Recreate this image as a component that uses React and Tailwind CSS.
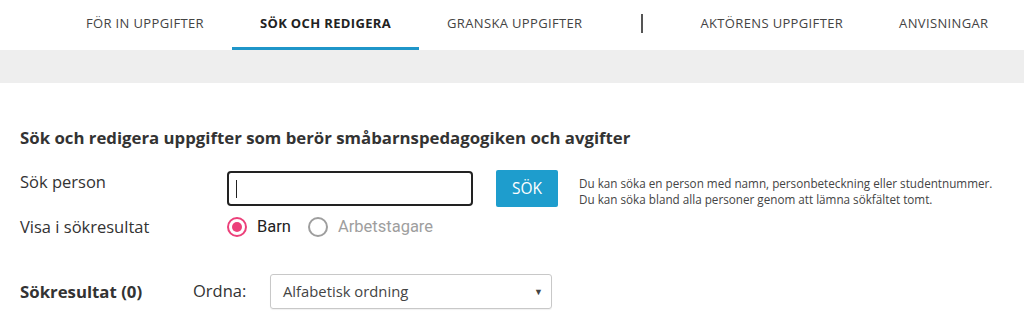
export default function App() {
  const tabs = [
    { label: "FÖR IN UPPGIFTER" },
    { label: "SÖK OCH REDIGERA", active: true },
    { label: "GRANSKA UPPGIFTER" },
  ];

  return (
    <div className="w-[1024px] h-[336px] bg-white overflow-hidden text-[#333] font-['Open_Sans',sans-serif]">
      {/* top navigation */}
      <nav className="h-[50px] flex items-stretch pl-[58px] whitespace-nowrap">
        {tabs.map((t) => (
          <div
            key={t.label}
            className={
              "px-[28px] flex items-center text-[13px] tracking-[0.35px] border-b-[3px] " +
              (t.active
                ? "font-bold text-[#222] border-[#1f96c9]"
                : "text-[#444] border-transparent")
            }
          >
            {t.label}
          </div>
        ))}
        <div className="flex items-center pb-[3px] pl-[31px] pr-[57px]">
          <span className="block w-[2px] h-[19px] bg-[#555]" />
        </div>
        <div className="pr-[28px] flex items-center text-[13px] tracking-[0.35px] text-[#444] border-b-[3px] border-transparent">
          AKTÖRENS UPPGIFTER
        </div>
        <div className="px-[28px] flex items-center text-[13px] tracking-[0.35px] text-[#444] border-b-[3px] border-transparent">
          ANVISNINGAR
        </div>
      </nav>

      <div className="h-[33px] bg-[#eeeeee]" />

      <div className="pl-[20px] pt-[44px]">
        <h1 className="text-[16.8px] leading-[22px] font-bold text-[#333] whitespace-nowrap">
          Sök och redigera uppgifter som berör småbarnspedagogiken och avgifter
        </h1>

        <div className="mt-[21px] flex items-start">
          <div className="w-[207px] text-[16.5px] leading-[24px]">Sök person</div>
          <div className="mt-[1px] w-[246px] h-[35px] border-2 border-[#222] rounded-[4px] flex items-center pl-[7px]">
            <span className="block w-[1px] h-[18px] bg-[#222]" />
          </div>
          <button className="ml-[23px] w-[62px] h-[37px] bg-[#1e9dcd] text-white text-[15.5px] rounded-[2px]">
            SÖK
          </button>
          <div className="ml-[21px] mt-[5px] text-[11.7px] leading-[16px] text-[#444] whitespace-nowrap">
            <div>Du kan söka en person med namn, personbeteckning eller studentnummer.</div>
            <div>Du kan söka bland alla personer genom att lämna sökfältet tomt.</div>
          </div>
        </div>

        <div className="mt-[10px] flex items-center h-[20px]">
          <div className="w-[207px] text-[16.5px]">Visa i sökresultat</div>
          <div className="flex items-center font-['Roboto',sans-serif] text-[16.5px]">
            <span className="w-[20px] h-[20px] rounded-full border-2 border-[#ec407a] flex items-center justify-center">
              <span className="w-[10px] h-[10px] rounded-full bg-[#ec407a]" />
            </span>
            <span className="ml-[10px] text-[#222]">Barn</span>
            <span className="ml-[17px] w-[20px] h-[20px] rounded-full border-2 border-[#9e9e9e]" />
            <span className="ml-[10px] text-[#9e9e9e]">Arbetstagare</span>
          </div>
        </div>

        <div className="mt-[37px] flex items-center">
          <div className="w-[173px] text-[16.8px] font-bold">Sökresultat (0)</div>
          <div className="w-[77px] text-[16.5px]">Ordna:</div>
          <div className="w-[282px] h-[35px] border border-[#c8c8c8] rounded-[3px] flex items-center justify-between pl-[12px] pr-[8px] shadow-[0_1px_1px_rgba(0,0,0,0.06)]">
            <span className="text-[14.8px] text-[#444]">Alfabetisk ordning</span>
            <span className="text-[9px] text-[#444]">▼</span>
          </div>
        </div>
      </div>
    </div>
  );
}
